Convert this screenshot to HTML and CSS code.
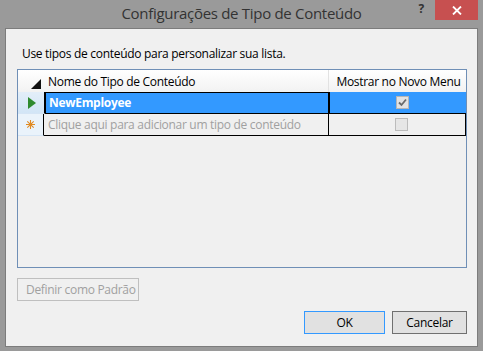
FILE: index.html
```html
<!DOCTYPE html>
<html lang="pt">
<head>
  <meta charset="UTF-8">
  <title>Configurações de Tipo de Conteúdo</title>
  <link rel="stylesheet" href="styles.css">
</head>
<body>

  <div class="window">
    <div class="titlebar">
      <div></div>
      <div class="title">Configurações de Tipo de Conteúdo</div>
      <div class="caption-buttons">
        <span class="help">?</span>
        <span class="close">
          <svg width="10" height="9" viewBox="0 0 10 9">
            <path d="M1 0.5 L9 8.5 M9 0.5 L1 8.5" stroke="#fff" stroke-width="1.8"/>
          </svg>
        </span>
      </div>
    </div>

    <div class="client">
      <div class="intro">Use tipos de conteúdo para personalizar sua lista.</div>

      <div class="grid">
        <div class="grid-row header">
          <div class="rowhead corner">
            <svg width="10" height="10" viewBox="0 0 10 10"><path d="M10 0 L10 10 L0 10 Z" fill="#111"/></svg>
          </div>
          <div class="cell col-name">Nome do Tipo de Conteúdo</div>
          <div class="cell col-menu">Mostrar no Novo Menu</div>
        </div>

        <div class="grid-row selected">
          <div class="rowhead current">
            <svg width="8" height="12" viewBox="0 0 8 12"><path d="M0 0 L8 6 L0 12 Z" fill="#2f8a2f"/></svg>
          </div>
          <div class="cell col-name focus">NewEmployee</div>
          <div class="cell col-menu">
            <span class="check checked">
              <svg width="11" height="11" viewBox="0 0 11 11"><path d="M2 5.5 L4.5 8 L9 2.5" fill="none" stroke="#6a6a6a" stroke-width="1.8"/></svg>
            </span>
          </div>
        </div>

        <div class="grid-row newrow">
          <div class="rowhead">
            <svg width="9" height="9" viewBox="0 0 9 9">
              <path d="M4.5 0 V9 M0 4.5 H9 M1.3 1.3 L7.7 7.7 M7.7 1.3 L1.3 7.7" stroke="#e08a22" stroke-width="1.1"/>
            </svg>
          </div>
          <div class="cell col-name placeholder">Clique aqui para adicionar um tipo de conteúdo</div>
          <div class="cell col-menu"><span class="check"></span></div>
        </div>
      </div>

      <div class="left-actions">
        <button class="btn" disabled>Definir como Padrão</button>
      </div>

      <div class="actions">
        <button class="btn default">OK</button>
        <button class="btn">Cancelar</button>
      </div>
    </div>
  </div>

</body>
</html>
```

FILE: styles.css
```css
body {
  margin: 0;
  font-family: "Segoe UI", "Open Sans", sans-serif;
  font-size: 12px;
  letter-spacing: -0.3px;
  color: #000;
}

.window {
  width: 483px;
  height: 351px;
  background: #9a9a9a;
  display: flex;
  flex-direction: column;
}

.titlebar {
  height: 28px;
  display: grid;
  grid-template-columns: 1fr auto 1fr;
}

.title {
  font-size: 15px;
  letter-spacing: -0.3px;
  color: #333;
  line-height: 27px;
}

.caption-buttons {
  display: flex;
  justify-content: flex-end;
  align-items: flex-start;
  padding-right: 5px;
}

.help {
  font-weight: bold;
  font-size: 12px;
  color: #333;
  line-height: 18px;
  margin-right: 11px;
}

.close {
  width: 43px;
  height: 20px;
  background: #c75050;
  display: flex;
  justify-content: center;
  align-items: center;
}

.client {
  flex: 1;
  margin: 0 5px 4px 5px;
  background: #f0f0f0;
  border: 1px solid #7c7c7c;
  padding: 17px 10px 0 11px;
  display: flex;
  flex-direction: column;
}

.intro {
  line-height: 16px;
  padding-left: 5px;
  margin-bottom: 7px;
}

.grid {
  height: 197px;
  border: 1px solid #6f8fb6;
}

.grid-row {
  display: flex;
  height: 21px;
  border-bottom: 1px solid #000;
}

.grid-row.header {
  height: 22px;
  border-bottom: none;
  background: linear-gradient(#fff, #f2f2f2);
}

.rowhead {
  width: 25px;
  flex-shrink: 0;
  display: flex;
  justify-content: center;
  align-items: center;
  background: #eaf3fb;
  border-right: 1px solid #000;
  border-bottom: 1px solid #d5e5f5;
  margin-bottom: -1px;
}

.rowhead.corner {
  background: transparent;
  border: none;
  margin: 0;
  justify-content: flex-end;
  align-items: flex-end;
  padding: 0 3px 3px 0;
  box-sizing: border-box;
  width: 26px;
}

.rowhead.current {
  background: linear-gradient(#e3eef9, #d2e5f6);
  padding-left: 1px;
}

.cell {
  display: flex;
  align-items: center;
  box-sizing: border-box;
  border-right: 1px solid #000;
  white-space: nowrap;
}

.col-name {
  width: 285px;
  padding-left: 4px;
}

.col-menu {
  flex: 1;
  justify-content: center;
}

.header .cell {
  border-right: 1px solid #e2e2e2;
}

.header .col-menu {
  border-right: none;
  padding-left: 2px;
}

.selected .cell {
  background: #3399ff;
}

.selected .col-menu {
  border-right: none;
}

.focus {
  color: #fff;
  font-weight: bold;
  border-right-width: 2px;
  box-shadow: inset 1px 1px 0 #000;
}

.placeholder {
  color: #a0a0a0;
}

.check {
  width: 13px;
  height: 13px;
  box-sizing: border-box;
  border: 1px solid #bcbcbc;
  background: #e6e6e6;
  display: flex;
  justify-content: center;
  align-items: center;
  margin-left: 8px;
}

.check.checked {
  background: #e2e2e2;
  border-color: #b5b5b5;
}

.left-actions {
  margin-top: 10px;
  display: flex;
}

.actions {
  margin-top: 10px;
  display: flex;
  justify-content: flex-end;
  gap: 7px;
}

.btn {
  font-family: inherit;
  font-size: 12px;
  letter-spacing: -0.3px;
  white-space: nowrap;
  height: 23px;
  padding: 0 8px;
  background: #e1e1e1;
  border: 1px solid #adadad;
  color: #000;
}

.btn:disabled {
  background: #f0f0f0;
  border-color: #bfbfbf;
  color: #a0a0a0;
  width: 122px;
}

.btn.default {
  width: 81px;
  border-color: #3399ff;
}

.actions .btn {
  min-width: 75px;
}

.actions .btn:last-child {
  border-color: #707070;
}
```
